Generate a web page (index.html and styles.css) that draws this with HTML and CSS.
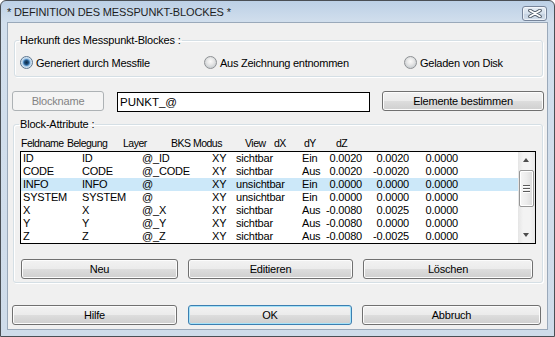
FILE: index.html
```html
<!DOCTYPE html>
<html lang="de">
<head>
    <meta charset="UTF-8">
    <title>Definition des Messpunkt-Blockes</title>
    <link rel="stylesheet" href="styles.css">
</head>
<body>
    <div class="window">
        <div class="titlebar">
            <span class="title">* DEFINITION DES MESSPUNKT-BLOCKES *</span>
            <div class="close">
                <svg width="14" height="9" viewBox="0 0 14 9">
                    <path d="M2 1.5 L12 7.5 M12 1.5 L2 7.5" stroke="#4b5663" stroke-width="3.6" stroke-linecap="round"/>
                    <path d="M2 1.5 L12 7.5 M12 1.5 L2 7.5" stroke="#fff" stroke-width="1.8" stroke-linecap="round"/>
                </svg>
            </div>
        </div>

        <div class="client">
            <fieldset class="group origin">
                <legend>Herkunft des Messpunkt-Blockes :</legend>
                <div class="radios">
                    <label class="radio checked"><span class="dot"></span>Generiert durch Messfile</label>
                    <label class="radio"><span class="dot"></span>Aus Zeichnung entnommen</label>
                    <label class="radio"><span class="dot"></span>Geladen von Disk</label>
                </div>
            </fieldset>

            <div class="name-row">
                <div class="btn disabled name-btn">Blockname</div>
                <div class="textbox">PUNKT_@</div>
                <div class="btn elem-btn">Elemente bestimmen</div>
            </div>

            <fieldset class="group attrs">
                <legend>Block-Attribute :</legend>
                <div class="list-head">
                    <span>Feldname</span>
                    <span>Belegung</span>
                    <span>Layer</span>
                    <span>BKS Modus</span>
                    <span>View</span>
                    <span>dX</span>
                    <span>dY</span>
                    <span>dZ</span>
                </div>
                <div class="listbox">
                    <div class="rows" id="rows"></div>
                    <div class="scrollbar">
                        <div class="arrow up"></div>
                        <div class="thumb"><span></span><span></span><span></span></div>
                        <div class="track"></div>
                        <div class="arrow down"></div>
                    </div>
                </div>
                <div class="btn-row">
                    <div class="btn neu">Neu</div>
                    <div class="btn edit">Editieren</div>
                    <div class="btn del">Löschen</div>
                </div>
            </fieldset>

            <div class="dialog-buttons">
                <div class="btn hilfe">Hilfe</div>
                <div class="btn ok default">OK</div>
                <div class="btn abbruch">Abbruch</div>
            </div>
        </div>
    </div>

    <script>
        const attribute = [
            ['ID', 'ID', '@_ID', 'XY', 'sichtbar', 'Ein', '0.0020', '0.0020', '0.0000'],
            ['CODE', 'CODE', '@_CODE', 'XY', 'sichtbar', 'Aus', '0.0020', '-0.0020', '0.0000'],
            ['INFO', 'INFO', '@', 'XY', 'unsichtbar', 'Ein', '0.0000', '0.0000', '0.0000'],
            ['SYSTEM', 'SYSTEM', '@', 'XY', 'unsichtbar', 'Ein', '0.0000', '0.0000', '0.0000'],
            ['X', 'X', '@_X', 'XY', 'sichtbar', 'Aus', '-0.0080', '0.0025', '0.0000'],
            ['Y', 'Y', '@_Y', 'XY', 'sichtbar', 'Aus', '-0.0080', '0.0000', '0.0000'],
            ['Z', 'Z', '@_Z', 'XY', 'sichtbar', 'Aus', '-0.0080', '-0.0025', '0.0000']
        ];
        const selected = 2;

        const lista = document.getElementById('rows');
        attribute.forEach((zeile, index) => {
            const row = document.createElement('div');
            row.className = 'row' + (index === selected ? ' selected' : '');
            zeile.forEach((wert, col) => {
                const cell = document.createElement('span');
                cell.textContent = wert;
                if (col >= 6) cell.className = 'num';
                row.appendChild(cell);
            });
            lista.appendChild(row);
        });
    </script>
</body>
</html>
```

FILE: styles.css
```css
body {
    margin: 0;
    padding: 0;
    font-family: "Liberation Sans", Arial, sans-serif;
    font-size: 11px;
    color: #000;
    background: #fff;
}
.window {
    width: 555px;
    height: 337px;
    box-sizing: border-box;
    border: 1px solid #4a4f55;
    border-radius: 6px 6px 0 0;
    background: linear-gradient(to bottom, #bcd0e6 0px, #d2dfed 22px, #cfdcea 100%);
    display: flex;
    flex-direction: column;
}
.titlebar {
    height: 21px;
    display: flex;
    align-items: center;
    justify-content: space-between;
    padding: 0 7px 0 6px;
}
.title {
    font-size: 11px;
    color: #1e1e1e;
    letter-spacing: -0.15px;
    margin-top: 1px;
}
.close {
    width: 23px;
    height: 13px;
    margin-top: 3px;
    border: 1px solid #76849a;
    border-radius: 3px;
    background: linear-gradient(to bottom, #e6edf5 0%, #d5e0ec 50%, #c5d3e3 51%, #d3deea 100%);
    box-shadow: inset 0 0 0 1px rgba(255, 255, 255, 0.6);
    display: flex;
    align-items: center;
    justify-content: center;
}
.client {
    flex: 1;
    margin: 0 6px 6px 6px;
    border: 1px solid #9aa9ba;
    background: #f0f0f0;
    display: flex;
    flex-direction: column;
}

/* Gruppen */
.group {
    border: 1px solid #d5dfe5;
    border-radius: 3px;
    box-shadow: inset 1px 1px 0 #fff, 1px 1px 0 #fff;
    padding: 0;
    min-width: 0;
}
.group legend {
    padding: 0 1px;
    margin-left: -1px;
    line-height: 13px;
    letter-spacing: -0.2px;
}
.origin {
    margin: 11px 4px 0 6px;
    padding: 8px 0 6px 5px;
}
.radios {
    display: grid;
    grid-template-columns: 184px 200px auto;
    height: 15px;
    align-items: center;
}
.radio {
    display: flex;
    align-items: center;
    gap: 3px;
    letter-spacing: -0.25px;
}
.dot {
    width: 11px;
    height: 11px;
    border: 1px solid #8e9194;
    border-radius: 50%;
    background: radial-gradient(circle at 50% 40%, #fbfbfb 0, #e9e9e9 3px, #cfd3d6 6px);
}
.radio.checked .dot {
    border-color: #5b7690;
    background: radial-gradient(circle, #0f2c48 0, #1d4d7a 2px, #4d88bf 3px, #a9cbe8 4px, #e2ebf3 5.5px);
}

/* Blockname */
.name-row {
    display: flex;
    align-items: flex-start;
    margin: 14px 0 0 4px;
}
.btn {
    box-sizing: border-box;
    height: 20px;
    border: 1px solid #707070;
    border-radius: 3px;
    background: linear-gradient(to bottom, #f2f2f2 0%, #ebebeb 50%, #dddddd 51%, #cfcfcf 100%);
    box-shadow: inset 0 0 0 1px #fcfcfc;
    display: flex;
    align-items: center;
    justify-content: center;
    letter-spacing: -0.2px;
}
.btn.disabled {
    border-color: #adb2b5;
    background: #f4f4f4;
    color: #838383;
    box-shadow: none;
}
.btn.default {
    border-color: #3c7fb1;
    box-shadow: inset 0 0 0 1px #a6e2f8;
}
.name-btn {
    width: 92px;
}
.textbox {
    box-sizing: border-box;
    width: 253px;
    height: 20px;
    margin: 1px 0 0 13px;
    border: 1px solid #000;
    background: #fff;
    padding: 0 2px;
    line-height: 18px;
    font-size: 11.5px;
}
.elem-btn {
    width: 162px;
    margin-left: 12px;
}

/* Attribute */
.attrs {
    margin: 6px 4px 0 5px;
    padding: 6px 0 3px 6px;
}
.list-head {
    display: grid;
    grid-template-columns: 46px 56px 48px 74px 29px 30px 32px auto;
    height: 13px;
    line-height: 13px;
    padding-left: 1px;
    font-size: 10.5px;
    letter-spacing: -0.5px;
    white-space: nowrap;
}
.listbox {
    box-sizing: border-box;
    width: 516px;
    height: 93px;
    margin-top: 1px;
    border: 1px solid #000;
    background: #fff;
    display: flex;
}
.rows {
    flex: 1;
}
.row {
    display: grid;
    grid-template-columns: 59px 60px 70px 24px 66px 24px 36px 47px 49px;
    height: 13px;
    line-height: 13px;
    padding-left: 2px;
    letter-spacing: -0.2px;
}
.row.selected {
    background: #cce8f9;
}
.row .num {
    text-align: right;
}
.scrollbar {
    width: 17px;
    display: flex;
    flex-direction: column;
    background: linear-gradient(to right, #e5e5e5, #f3f3f3 30%, #f3f3f3 70%, #e8e8e8);
}
.arrow {
    height: 17px;
    position: relative;
}
.arrow::after {
    content: "";
    position: absolute;
    left: 5px;
    width: 0;
    height: 0;
    border-left: 3.5px solid transparent;
    border-right: 3.5px solid transparent;
}
.arrow.up::after {
    top: 6px;
    border-bottom: 4px solid #4d4d4d;
}
.arrow.down::after {
    top: 7px;
    border-top: 4px solid #4d4d4d;
}
.thumb {
    box-sizing: border-box;
    height: 37px;
    margin: 1px 1px 0 1px;
    border: 1px solid #969696;
    border-radius: 2px;
    background: linear-gradient(to right, #f6f6f6, #ececec 50%, #dcdcdc);
    box-shadow: inset 0 0 0 1px #fff;
    display: flex;
    flex-direction: column;
    align-items: center;
    justify-content: center;
    gap: 2px;
}
.thumb span {
    width: 7px;
    height: 1px;
    background: #5a5a5a;
    box-shadow: 0 1px 0 #fff;
}
.track {
    flex: 1;
}
.btn-row {
    display: flex;
    margin: 15px 0 0 1px;
}
.neu {
    width: 157px;
}
.edit {
    width: 165px;
    margin-left: 10px;
}
.del {
    width: 170px;
    margin-left: 10px;
}

/* Dialog */
.dialog-buttons {
    display: flex;
    margin: 22px 0 0 4px;
}
.hilfe {
    width: 165px;
}
.ok {
    width: 164px;
    margin-left: 11px;
}
.abbruch {
    width: 179px;
    margin-left: 10px;
}
```
